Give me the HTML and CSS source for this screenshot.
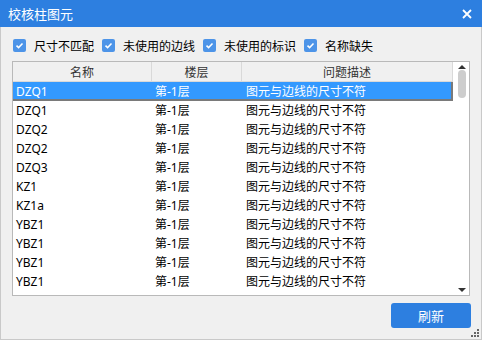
FILE: index.html
```html
<!DOCTYPE html>
<html>
<head>
<meta charset="utf-8">
<link rel="stylesheet" href="styles.css">
</head>
<body>
<div class="window">
  <div class="titlebar">
    <span class="title">校核柱图元</span>
    <svg class="close" width="10" height="10" viewBox="0 0 10 10"><path d="M1 1L9 9M9 1L1 9" stroke="#fff" stroke-width="1.8"/></svg>
  </div>
  <div class="content">
    <div class="checks">
      <label class="chk"><svg class="box" width="13" height="13" viewBox="0 0 13 13"><rect width="13" height="13" rx="2" fill="#4d94e8"/><path d="M3.5 6.6L5.6 8.6L9.5 4.6" stroke="#fff" stroke-width="1.5" fill="none"/></svg><span>尺寸不匹配</span></label>
      <label class="chk"><svg class="box" width="13" height="13" viewBox="0 0 13 13"><rect width="13" height="13" rx="2" fill="#4d94e8"/><path d="M3.5 6.6L5.6 8.6L9.5 4.6" stroke="#fff" stroke-width="1.5" fill="none"/></svg><span>未使用的边线</span></label>
      <label class="chk"><svg class="box" width="13" height="13" viewBox="0 0 13 13"><rect width="13" height="13" rx="2" fill="#4d94e8"/><path d="M3.5 6.6L5.6 8.6L9.5 4.6" stroke="#fff" stroke-width="1.5" fill="none"/></svg><span>未使用的标识</span></label>
      <label class="chk"><svg class="box" width="13" height="13" viewBox="0 0 13 13"><rect width="13" height="13" rx="2" fill="#4d94e8"/><path d="M3.5 6.6L5.6 8.6L9.5 4.6" stroke="#fff" stroke-width="1.5" fill="none"/></svg><span>名称缺失</span></label>
    </div>
    <div class="table">
      <div class="grid">
        <div class="row head">
          <div class="c1">名称</div><div class="c2">楼层</div><div class="c3">问题描述</div>
        </div>
        <div class="row sel"><div class="c1">DZQ1</div><div class="c2">第-1层</div><div class="c3">图元与边线的尺寸不符</div></div>
        <div class="row"><div class="c1">DZQ1</div><div class="c2">第-1层</div><div class="c3">图元与边线的尺寸不符</div></div>
        <div class="row"><div class="c1">DZQ2</div><div class="c2">第-1层</div><div class="c3">图元与边线的尺寸不符</div></div>
        <div class="row"><div class="c1">DZQ2</div><div class="c2">第-1层</div><div class="c3">图元与边线的尺寸不符</div></div>
        <div class="row"><div class="c1">DZQ3</div><div class="c2">第-1层</div><div class="c3">图元与边线的尺寸不符</div></div>
        <div class="row"><div class="c1">KZ1</div><div class="c2">第-1层</div><div class="c3">图元与边线的尺寸不符</div></div>
        <div class="row"><div class="c1">KZ1a</div><div class="c2">第-1层</div><div class="c3">图元与边线的尺寸不符</div></div>
        <div class="row"><div class="c1">YBZ1</div><div class="c2">第-1层</div><div class="c3">图元与边线的尺寸不符</div></div>
        <div class="row"><div class="c1">YBZ1</div><div class="c2">第-1层</div><div class="c3">图元与边线的尺寸不符</div></div>
        <div class="row"><div class="c1">YBZ1</div><div class="c2">第-1层</div><div class="c3">图元与边线的尺寸不符</div></div>
        <div class="row"><div class="c1">YBZ1</div><div class="c2">第-1层</div><div class="c3">图元与边线的尺寸不符</div></div>
      </div>
      <div class="scroll">
        <svg width="16" height="10" viewBox="0 0 16 10"><path d="M4 7L8 3L12 7Z" fill="#333"/></svg>
        <div class="thumb"></div>
        <div class="spacer"></div>
        <svg width="16" height="10" viewBox="0 0 16 10"><path d="M4 3L8 7L12 3Z" fill="#333"/></svg>
      </div>
    </div>
    <div class="actions">
      <button class="btn">刷新</button>
    </div>
    <svg class="grip" width="9" height="9" viewBox="0 0 9 9"><g fill="#666"><rect x="6" y="0" width="2" height="2"/><rect x="3" y="3" width="2" height="2"/><rect x="6" y="3" width="2" height="2"/><rect x="0" y="6" width="2" height="2"/><rect x="3" y="6" width="2" height="2"/><rect x="6" y="6" width="2" height="2"/></g></svg>
  </div>
</div>
</body>
</html>
```
FILE: styles.css
```css
* { box-sizing: border-box; }
html, body { margin: 0; padding: 0; }
body {
  width: 482px;
  height: 340px;
  overflow: hidden;
  font-family: "Noto Sans", "Noto Sans CJK SC", sans-serif;
  font-size: 12px;
  color: #000;
}
.window {
  width: 482px;
  height: 340px;
  display: flex;
  flex-direction: column;
}
.titlebar {
  height: 27px;
  background: #2d7fe0;
  display: flex;
  align-items: center;
  justify-content: space-between;
  padding: 0 10px 0 8px;
  color: #fff;
}
.title {
  font-size: 13px;
  font-family: "Noto Sans CJK SC", sans-serif;
}
.close { display: block; }
.content {
  position: relative;
  flex: 1;
  background: #f0f0f0;
  border: 1px solid #c9c9c9;
  border-top: none;
  padding: 12px 10px 0 12px;
}
.checks {
  display: flex;
  height: 13px;
  align-items: center;
  gap: 8px;
}
.chk {
  display: flex;
  align-items: center;
  font-family: "Noto Sans CJK SC", sans-serif;
}
.box { display: block; flex: none; }
.chk span { margin-left: 8px; line-height: 13px; }
.table {
  margin-top: 9px;
  margin-left: -1px;
  width: 458px;
  height: 235px;
  border: 1px solid #b9b9b9;
  background: #fff;
  display: flex;
  overflow: hidden;
}
.grid {
  width: 440px;
  display: flex;
  flex-direction: column;
}
.row {
  display: grid;
  grid-template-columns: 139px 90px 211px;
  height: 19px;
  line-height: 19px;
  font-family: "Noto Sans", "Noto Sans CJK SC", sans-serif;
  flex: none;
}
.row > div { padding-left: 3px; white-space: nowrap; overflow: hidden; }
.row .c3 { padding-left: 4px; }
.row.head {
  height: 20px;
  background: #f0f0f0;
  border-bottom: 1px solid #d9d9d9;
  color: #333;
  font-family: "Noto Sans CJK SC", sans-serif;
}
.row.head > div {
  text-align: center;
  border-right: 1px solid #d9d9d9;
  padding-left: 0;
  line-height: 19px;
}
.row.sel {
  background: #3399ff;
  color: #fff;
  box-shadow: inset -2px -2px 0 #7a7a7a;
}
.scroll {
  width: 16px;
  display: flex;
  flex-direction: column;
  align-items: center;
  border-left: 1px solid #fff;
}
.scroll svg { display: block; flex: none; }
.thumb {
  width: 8px;
  height: 28px;
  border-radius: 4px;
  background: #cdcdcd;
  margin-top: -2px;
}
.spacer { flex: 1; }
.actions {
  display: flex;
  justify-content: flex-end;
  margin-top: 7px;
}
.btn {
  width: 80px;
  height: 25px;
  border: none;
  border-radius: 3px;
  background: #2d7fe0;
  color: #fff;
  font-size: 13px;
  font-family: "Noto Sans CJK SC", sans-serif;
  padding: 0;
}
.grip {
  position: absolute;
  right: 1px;
  bottom: 1px;
  display: block;
}
```
